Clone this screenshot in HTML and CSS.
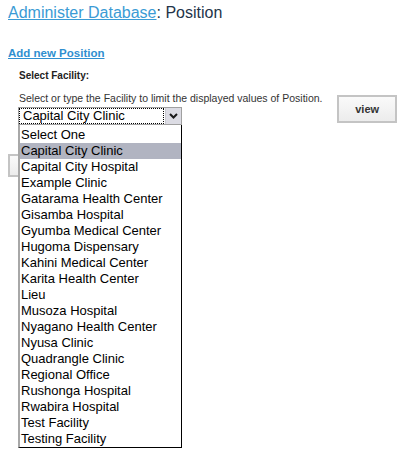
FILE: index.html
```html
<!DOCTYPE html>
<html>
<head>
<meta charset="utf-8">
<link rel="stylesheet" href="styles.css">
</head>
<body>
<div class="page">
  <h1 class="title"><a href="#" class="crumb">Administer Database</a>: Position</h1>
  <p class="addrow"><a href="#" class="addlink">Add new Position</a></p>
  <div class="filter">
    <div class="label">Select Facility:</div>
    <div class="filterrow">
      <div class="pick">
        <div class="desc">Select or type the Facility to limit the displayed values of Position.</div>
        <div class="selectwrap">
          <div class="select">
            <span class="selval">Capital City Clinic</span>
            <span class="arrow"><svg width="9" height="6" viewBox="0 0 9 6"><path d="M1 1 L4.5 4.5 L8 1" fill="none" stroke="#1a1a1a" stroke-width="2"/></svg></span>
          </div>
          <ul class="list">
            <li>Select One</li>
            <li class="sel">Capital City Clinic</li>
            <li>Capital City Hospital</li>
            <li>Example Clinic</li>
            <li>Gatarama Health Center</li>
            <li>Gisamba Hospital</li>
            <li>Gyumba Medical Center</li>
            <li>Hugoma Dispensary</li>
            <li>Kahini Medical Center</li>
            <li>Karita Health Center</li>
            <li>Lieu</li>
            <li>Musoza Hospital</li>
            <li>Nyagano Health Center</li>
            <li>Nyusa Clinic</li>
            <li>Quadrangle Clinic</li>
            <li>Regional Office</li>
            <li>Rushonga Hospital</li>
            <li>Rwabira Hospital</li>
            <li>Test Facility</li>
            <li>Testing Facility</li>
          </ul>
        </div>
      </div>
      <button class="btn view">view</button>
    </div>
  </div>
  <div class="actions"><button class="btn under"></button></div>
</div>
</body>
</html>
```

FILE: styles.css
```css
html, body {
  margin: 0;
  padding: 0;
  background: #ffffff;
}
body {
  font-family: "Liberation Sans", Arial, sans-serif;
  color: #333333;
}
.page {
  padding: 2px 8px 0 8px;
  min-height: 453px;
  box-sizing: border-box;
}
.title {
  margin: 0;
  font-size: 16px;
  font-weight: normal;
  line-height: 22px;
  color: #233449;
}
.crumb {
  color: #3a9bd5;
  text-decoration: underline;
}
.addrow {
  margin: 21px 0 0 0;
  line-height: 14px;
}
.addlink {
  font-size: 11.5px;
  font-weight: bold;
  color: #2f8fd0;
  text-decoration: underline;
}
.filter {
  padding-left: 11px;
  margin-top: 10px;
}
.label {
  font-size: 10px;
  font-weight: bold;
  color: #222222;
  line-height: 12px;
}
.filterrow {
  display: flex;
  align-items: flex-start;
  margin-top: 10px;
}
.pick {
  width: 320px;
}
.desc {
  font-size: 10.5px;
  line-height: 13px;
  color: #333333;
}
.selectwrap {
  position: relative;
  width: 164px;
  margin: 2px 0 0 -1px;
}
.select {
  display: flex;
  align-items: center;
  height: 18px;
  box-sizing: border-box;
  border: 1px solid #a0a0a0;
  background: #fff;
}
.selval {
  flex: 1;
  height: 16px;
  box-sizing: border-box;
  border: 1px dotted #000;
  margin-right: 1px;
  padding-left: 3px;
  font-size: 13px;
  line-height: 14px;
  color: #000;
}
.arrow {
  width: 15px;
  height: 16px;
  background: #dcdce4;
  border-left: 1px solid #c8c8d0;
  display: flex;
  align-items: center;
  justify-content: center;
}
.list {
  position: absolute;
  top: 18px;
  left: 0;
  width: 164px;
  box-sizing: border-box;
  margin: 0;
  padding: 2px 0 0 0;
  list-style: none;
  background: #ffffff;
  border-left: 2px solid #a8a8a8;
  border-right: 1px solid #000;
  border-bottom: 1px solid #000;
  z-index: 2;
}
.list li {
  height: 16px;
  line-height: 16px;
  padding-left: 1px;
  font-size: 13px;
  color: #000000;
  white-space: nowrap;
}
.list li.sel {
  background: #b1b4c1;
}
.btn {
  font-family: "Liberation Sans", Arial, sans-serif;
  font-size: 11px;
  font-weight: bold;
  color: #333;
  background: linear-gradient(#fafafa, #ececec);
  border: 2px solid #c4c4c4;
  border-radius: 0;
  padding: 0;
}
.view {
  width: 60px;
  height: 28px;
  margin-top: 3px;
}
.actions {
  margin-top: 29px;
}
.under {
  display: block;
  width: 60px;
  height: 23px;
}
```
